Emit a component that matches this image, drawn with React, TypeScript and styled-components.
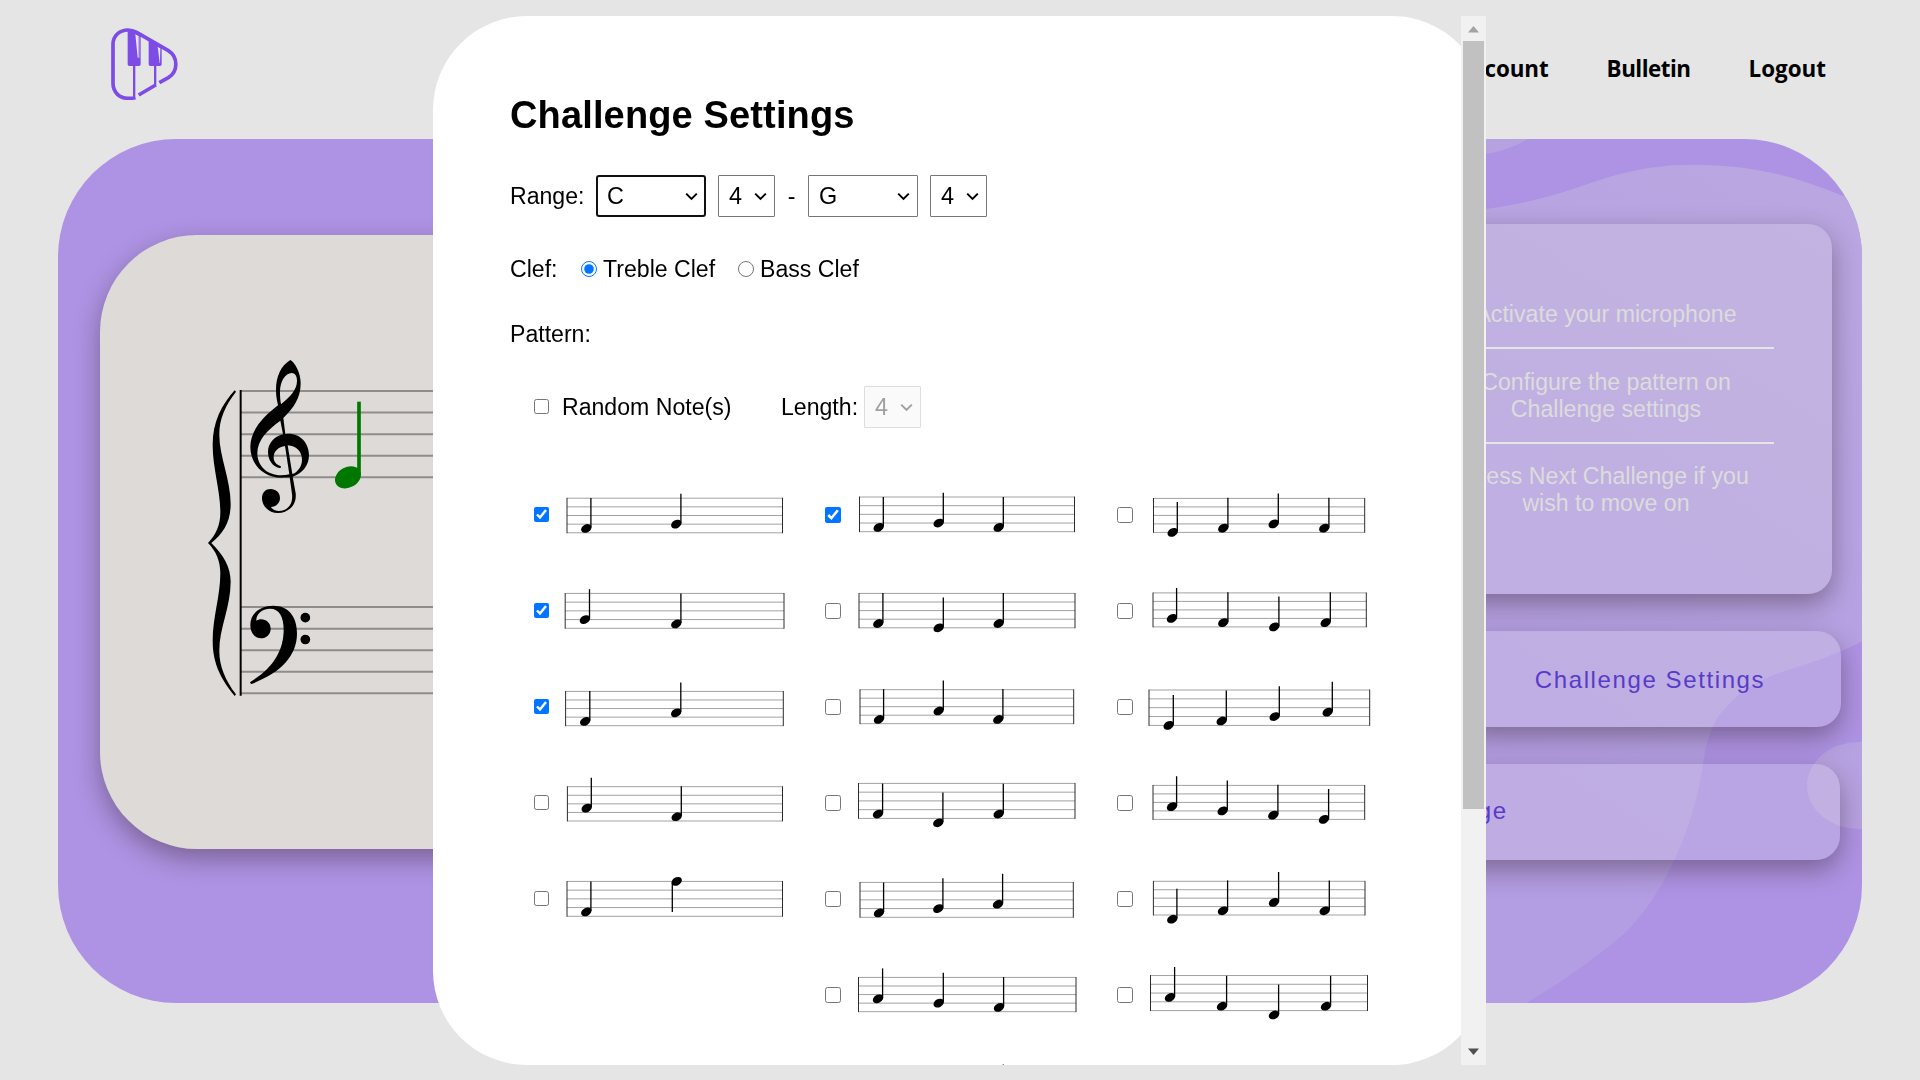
import React from 'react';
import styled, { createGlobalStyle, css } from 'styled-components';

const GlobalStyle = createGlobalStyle`
  * { box-sizing: border-box; }
  html, body { margin: 0; padding: 0; overflow: hidden; }
  body { background: #e5e5e5; font-family: "Liberation Sans", Arial, sans-serif; color: #000; }
`;

const Page = styled.div`
  width: 1920px;
  height: 1080px;
  background: #e5e5e5;
  overflow: hidden;
`;

const Header = styled.header`
  height: 139px;
  padding: 0 94px 0 111px;
  display: flex;
  justify-content: space-between;
`;

const Logo = styled.svg`
  display: block;
  margin-top: 28px;
  width: 67px;
  height: 72px;
`;

const Nav = styled.nav`
  display: flex;
  gap: 58px;
  margin-top: 53px;
  height: 32px;
`;

const NavLink = styled.a<{ $spacing?: number }>`
  font: 700 22.4px/32px "Open Sans", "Noto Sans", sans-serif;
  letter-spacing: ${(p) => p.$spacing ?? 0}px;
  color: #000;
`;

const Stage = styled.main`
  position: relative;
  margin: 0 58px;
  height: 864px;
  border-radius: 118px;
  background: #ae93e4;
  overflow: hidden;
  display: flex;
  gap: 28px;
  padding: 85px 21px 0 42px;
`;

const Waves = styled.svg`
  position: absolute;
  inset: 0;
  width: 100%;
  height: 100%;
`;

const shadow = css`
  box-shadow: 0 10px 26px rgba(40, 20, 20, 0.38);
`;

const Sheet = styled.section`
  ${shadow}
  position: relative;
  margin-top: 11px;
  width: 860px;
  height: 614px;
  border-radius: 97px;
  background: #dedad7;
  padding: 105px 0 0 80px;
`;

const GrandStaff = styled.svg`
  display: block;
  width: 720px;
  height: 370px;
`;

const Side = styled.section`
  position: relative;
  flex: 1;
  display: flex;
  flex-direction: column;
  align-items: flex-end;
  gap: 37px;
`;

const HelpCard = styled.div`
  ${shadow}
  width: 452px;
  height: 370px;
  margin-right: 9px;
  border-radius: 24px;
  background: rgba(222, 218, 227, 0.25);
  padding: 77px 58px 0;
`;

const HelpStep = styled.p<{ $divided?: boolean }>`
  margin: 0;
  font-size: 23.15px;
  line-height: 27px;
  text-align: center;
  color: #dcdcdc;
  white-space: pre-line;
  ${(p) => p.$divided && css`
    border-bottom: 2px solid #e5e5e5;
    padding-bottom: 19px;
    margin-bottom: 20px;
  `}

  &:last-child {
    margin-top: -1px;
  }
`;

const ButtonRow = styled.div`
  display: flex;
  justify-content: flex-end;
  width: 100%;
`;

const ActionButton = styled.button<{ $width: number; $offset?: number; $top?: number; $bottom?: number }>`
  ${shadow}
  width: ${(p) => p.$width}px;
  height: 96px;
  margin-right: ${(p) => p.$offset ?? 0}px;
  border: 0;
  border-radius: 24px;
  background: rgba(222, 218, 227, 0.25);
  color: #583bc9;
  font: 400 24px/30px "Liberation Sans", Arial, sans-serif;
  letter-spacing: 1.6px;
  padding: ${(p) => p.$top ?? 0}px 0 ${(p) => p.$bottom ?? 0}px;
`;

const Overlay = styled.div`
  position: fixed;
  inset: 0;
  display: flex;
  align-items: flex-start;
  padding: 16px 0 0 433px;
`;

const Dialog = styled.div`
  position: relative;
  width: 1053px;
  height: 1049px;
`;

const DialogBody = styled.div`
  height: 100%;
  border-radius: 94px;
  background: #fff;
  overflow: hidden;
  padding: 75px 0 0 77px;
`;

const Title = styled.h2`
  margin: 0;
  font-size: 38px;
  line-height: 48px;
  letter-spacing: 0.14px;
`;

const Row = styled.div<{ $top: number; $height: number; $indent?: number }>`
  display: flex;
  align-items: center;
  margin-top: ${(p) => p.$top}px;
  height: ${(p) => p.$height}px;
  padding-left: ${(p) => p.$indent ?? 0}px;
  font-size: 23.1px;
  line-height: 28px;
`;

const Label = styled.span<{ $width?: number; $left?: number; $center?: boolean }>`
  width: ${(p) => (p.$width ? `${p.$width}px` : 'auto')};
  margin-left: ${(p) => p.$left ?? 0}px;
  text-align: ${(p) => (p.$center ? 'center' : 'left')};
  white-space: nowrap;
`;

const SelectBox = styled.div<{ $width: number; $gap?: number }>`
  position: relative;
  width: ${(p) => p.$width}px;
  height: 42px;
  margin-right: ${(p) => p.$gap ?? 0}px;

  svg {
    position: absolute;
    right: 8px;
    top: 17px;
    width: 13px;
    height: 9px;
    pointer-events: none;
  }
`;

const NativeSelect = styled.select<{ $active?: boolean }>`
  appearance: none;
  width: 100%;
  height: 100%;
  border: ${(p) => (p.$active ? '2px solid #101010' : '1px solid #767676')};
  border-radius: ${(p) => (p.$active ? 3 : 1)}px;
  padding: 0 0 0 ${(p) => (p.$active ? 9 : 10)}px;
  background: #fff;
  color: #000;
  font: 400 23.4px/28px "Liberation Sans", Arial, sans-serif;
  outline: 0;

  &:disabled {
    border-color: #dedede;
    background: #fafafa;
    color: #a0a0a0;
    opacity: 1;
  }
`;

const Radio = styled.input.attrs({ type: 'radio' })`
  width: 16px;
  height: 16px;
  margin: 0 6px 0 0;
`;

const Check = styled.input.attrs({ type: 'checkbox' })<{ $size?: number }>`
  flex: none;
  width: ${(p) => p.$size ?? 16}px;
  height: ${(p) => p.$size ?? 16}px;
  margin: 0 0 ${(p) => (p.$size === 15 ? 1 : 0)}px;
`;

const Patterns = styled.div`
  display: grid;
  grid-template-columns: 291px 292px 270px;
  margin: 39px 0 0 24px;
`;

const PatternColumn = styled.div`
  display: flex;
  flex-direction: column;
`;

const PatternItem = styled.label`
  display: grid;
  grid-template-columns: 16px 240px;
  gap: 9px;
  align-items: center;
  height: 96px;
`;

const PatternStaff = styled.svg`
  width: 240px;
  height: 96px;
  display: block;
`;

const Scrollbar = styled.div`
  position: absolute;
  top: 0;
  right: 0;
  width: 25px;
  height: 100%;
  background: #f1f1f1;
  display: flex;
  flex-direction: column;
  align-items: center;
`;

const ScrollArrow = styled.svg`
  width: 25px;
  height: 25px;
`;

const ScrollThumb = styled.div`
  width: 21px;
  height: 768px;
  margin-bottom: auto;
  background: #c1c1c1;
`;

type Pattern = {
  left: number;
  right: number;
  top: number;
  bottom: number;
  notes: [number, number][];
  checked?: boolean;
};

const p = (
  left: number, right: number, top: number, bottom: number,
  notes: [number, number][], checked = false,
): Pattern => ({ left, right, top, bottom, notes, checked });

const columns: { inset: number; size: number; items: Pattern[] }[] = [
  {
    inset: -1,
    size: 15,
    items: [
      p(7, 222.5, -16.8, 17.8, [[26.3, 1], [116.3, 2]], true),
      p(5.2, 224, -17.6, 17.3, [[24.9, 2], [116.3, 1]], true),
      p(5.6, 223.3, -15.6, 18.7, [[25.2, 1], [116.2, 3]], true),
      p(7.4, 222.5, -16.3, 18, [[26.7, 3], [116.7, 1]]),
      p(7, 222.5, -17.6, 17.3, [[26.3, 1], [116.7, 8]]),
    ],
  },
  {
    inset: 0,
    size: 16,
    items: [
      p(9.5, 224.5, -18, 16.7, [[28.7, 1], [88.7, 2], [148.7, 1]], true),
      p(9, 225, -17.6, 16.8, [[28.3, 1], [88.7, 0], [148.7, 1]]),
      p(10, 223.7, -17.3, 16.7, [[29, 1], [88.7, 3], [148.3, 1]]),
      p(8.5, 225, -19.6, 15.4, [[28, 1], [88.3, -1], [148.7, 1]]),
      p(10, 223.3, -16.6, 18.3, [[29, 1], [88.3, 2], [148, 3]]),
      p(8.5, 226, -17.6, 16.7, [[28, 3], [88.7, 2], [149, 1]]),
      p(9, 225, -17.6, 16.7, [[28.5, 1], [88.7, 1], [148.7, 3]]),
    ],
  },
  {
    inset: 2,
    size: 16,
    items: [
      p(13.5, 224.7, -16.6, 17.4, [[32.7, 0], [83.3, 1], [133.7, 2], [184.3, 1]]),
      p(13, 226.3, -18.1, 15.9, [[32, 2], [83.3, 1], [134.3, 0], [185.7, 1]]),
      p(9, 229.7, -17, 18.4, [[28.7, 0], [81.7, 1], [134.7, 2], [187.7, 3]]),
      p(13, 224.7, -17.6, 16.4, [[32, 3], [82.7, 2], [133.3, 1], [184, 0]]),
      p(13.4, 225, -17.7, 16, [[32.3, -1], [83, 1], [134, 3], [184.7, 1]]),
      p(10.5, 227.5, -19.5, 15.6, [[30, 3], [82, 1], [134, -1], [186, 1]]),
    ],
  },
];

function MiniStaff({ pattern, inset }: { pattern: Pattern; inset: number }) {
  const { left, right, top, bottom, notes } = pattern;
  const gap = (bottom - top) / 4;
  return (
    <PatternStaff viewBox={`${inset} -48 240 96`}>
      {[0, 1, 2, 3, 4].map((i) => (
        <path key={i} d={`M${left} ${top + gap * i}H${right}`} stroke="#a2a2a2" strokeWidth="1" />
      ))}
      <path d={`M${left} ${top - 0.4}V${bottom + 0.4}M${right} ${top - 0.4}V${bottom + 0.4}`} stroke="#2c2c2c" strokeWidth="1" />
      {notes.map(([x, step], i) => {
        const y = bottom - (gap / 2) * step;
        const down = step > 4;
        return (
          <g key={i}>
            <ellipse cx={x} cy={y} rx="5.5" ry="4" transform={`rotate(-28 ${x} ${y})`} />
            <path
              d={down ? `M${x - 4.4} ${y + 1}V${y + 30.5}` : `M${x + 4.6} ${y - 1}V${y - 30.4}`}
              stroke="#000"
              strokeWidth="1.3"
            />
          </g>
        );
      })}
    </PatternStaff>
  );
}

function Chevron({ color = '#000' }: { color?: string }) {
  return (
    <svg viewBox="0 0 13 9">
      <path d="M1.2 1.6 6.5 6.9 11.8 1.6" fill="none" stroke={color} strokeWidth="2" />
    </svg>
  );
}

function Select({ value, width, gap, active, disabled }: {
  value: string; width: number; gap?: number; active?: boolean; disabled?: boolean;
}) {
  return (
    <SelectBox $width={width} $gap={gap}>
      <NativeSelect $active={active} disabled={disabled} defaultValue={value}>
        <option>{value}</option>
      </NativeSelect>
      <Chevron color={disabled ? '#a0a0a0' : '#000'} />
    </SelectBox>
  );
}

function BrandLogo() {
  return (
    <Logo viewBox="213 85 201 216">
      <g fill="none" stroke="#7d4be6" strokeWidth="11">
        <path d="M286 294C279 296 272 296 264 296C238 296 219 277 219 251V134C219 109 238 91 264 91C274 91 283 94 290 98L385 153C415 172 415 215 385 234L358 249" />
        <path d="M347 256 296 286" />
      </g>
      <path d="M279 196H286V298H279ZM342 196H349V261H342Z" fill="#7d4be6" />
      <path fillRule="evenodd" fill="#7d4be6" d="M263 92H285L302 102V194Q302 199 297 199H268Q263 199 263 194ZM286 104 293 174 296 174 296 109Z" />
      <path fillRule="evenodd" fill="#7d4be6" d="M326 121 365 142V194Q365 199 360 199H331Q326 199 326 194ZM353 141 359 190 360 190 361 146Z" />
      <path d="M299 111V176" stroke="#e5e5e5" strokeWidth="1" />
    </Logo>
  );
}

const TREBLE =
  'M331 60C345 68 362 98 362 130C362 175 340 205 310 234L316 282C320 281 324 281 326 281C362 281 387 310 387 346C387 376 366 402 338 410L347 460C351 495 325 519 294 519C266 519 246 498 246 475C246 457 257 447 272 447C288 447 300 458 300 474C300 490 288 500 273 501C277 508 287 513 297 513C320 513 340 495 336 462L329 412C322 413 312 413 304 413C250 413 211 372 211 322C211 270 250 230 294 196C290 175 288 165 288 150C288 110 302 78 331 60Z' +
  'M335 99C316 99 300 125 300 155C300 170 301 182 303 193C330 170 351 150 351 122C351 108 345 99 335 99Z' +
  'M301 242C262 270 232 300 232 340C232 378 262 406 303 406C312 406 320 405 328 403L315 318C296 320 281 335 281 351C281 365 288 373 301 378C305 381 303 384 298 384C278 380 264 360 264 336C264 310 282 290 309 283Z' +
  'M323 316C348 317 366 335 366 359C366 378 354 396 337 402Z';

const BASS =
  'M211 855C211 821 240 797 280 797C325 797 351 830 351 880C351 950 300 1000 214 1032C210 1030 209 1027 212 1025C280 985 311 930 311 870C311 830 298 806 270 806C245 806 228 824 229 842C234 840 238 838 243 838C260 838 272 850 272 866C272 883 259 895 243 895C223 895 211 876 211 855Z';

const BRACE =
  'M164 151C125 195 98 245 98 315C98 385 121 450 121 517C121 555 108 585 84 609C108 633 121 663 121 700C121 768 98 833 98 903C98 973 125 1020 164 1068L168 1063C135 1020 117 975 118 930C118 865 152 800 152 725C152 680 130 645 94 609C130 580 152 545 152 492C152 420 118 350 118 285C117 240 135 197 168 155Z';

export default function App() {
  return (
    <>
      <GlobalStyle />
      <Page>
        <Header>
          <BrandLogo />
          <Nav>
            <NavLink $spacing={-0.1}>Account</NavLink>
            <NavLink $spacing={-0.5}>Bulletin</NavLink>
            <NavLink>Logout</NavLink>
          </Nav>
        </Header>

        <Stage>
          <Waves viewBox="58 139 1804 864">
            <defs>
              <linearGradient id="wave" gradientUnits="userSpaceOnUse" x1="1480" y1="800" x2="1850" y2="200">
                <stop offset="0" stopColor="#b39de3" />
                <stop offset="0.5" stopColor="#b6a2e2" />
                <stop offset="1" stopColor="#baa6e0" />
              </linearGradient>
            </defs>
            <circle cx="1470" cy="45" r="110.2" fill="#b6a2e1" />
            <path
              fill="url(#wave)"
              d="M1300 220C1370 220 1430 217 1486 209C1517 205 1540 199 1567 191C1608 177 1640 164.7 1694 164.7C1750 164.7 1795 176 1843 196L1880 212V634L1862 641.5C1845 650 1830 656 1810 663C1795 668 1782 671 1769 677C1757 682 1750 686 1741 693C1728 704 1720 713 1715 722C1708 737 1706 745 1703.500 760C1701 778 1698 794 1693 810C1688 828 1682 844 1674 860C1666 878 1656 895 1645 910C1632 927 1617 941 1600 953C1576 972 1552 988 1526 1003H1300Z"
            />
            <ellipse cx="1859" cy="785.500" rx="52" ry="43.500" fill="#b7a2e1" />
          </Waves>

          <Sheet>
            <GrandStaff viewBox="0 0 2160 1110">
              <path
                d="M180 153H2080M180 217.500H2080M180 282.500H2080M180 347.500H2080M180 412H2080M180 801H2080M180 866H2080M180 930.500H2080M180 995.500H2080M180 1060H2080"
                stroke="#8f8d8b"
                strokeWidth="6"
              />
              <path d="M182 150V1067" stroke="#000" strokeWidth="6" />
              <path d={BRACE} />
              <path d={TREBLE} fillRule="evenodd" />
              <path d={BASS} />
              <circle cx="376" cy="833" r="14.500" />
              <circle cx="376" cy="898.500" r="14.500" />
              <path d="M537 185V402" stroke="#007800" strokeWidth="11" />
              <ellipse cx="504" cy="412" rx="41" ry="30.500" transform="rotate(-28 504 412)" fill="#007800" />
            </GrandStaff>
          </Sheet>

          <Side>
            <HelpCard>
              <HelpStep $divided>Activate your microphone</HelpStep>
              <HelpStep $divided>{'Configure the pattern on\nChallenge settings'}</HelpStep>
              <HelpStep>{'Press Next Challenge if you\nwish to move on'}</HelpStep>
            </HelpCard>
            <ButtonRow>
              <ActionButton $width={382} $top={2}>Challenge Settings</ActionButton>
            </ButtonRow>
            <ButtonRow>
              <ActionButton $width={851} $offset={1} $bottom={2}>Next Challenge</ActionButton>
            </ButtonRow>
          </Side>
        </Stage>
      </Page>

      <Overlay>
        <Dialog role="dialog">
          <DialogBody>
            <Title>Challenge Settings</Title>
            <Row $top={36} $height={42}>
              <Label $width={86}>Range:</Label>
              <Select value="C" width={110} gap={12} active />
              <Select value="4" width={57} />
              <Label $width={33} $center>-</Label>
              <Select value="G" width={110} gap={12} />
              <Select value="4" width={57} />
            </Row>
            <Row $top={38} $height={28}>
              <Label $width={71}>Clef:</Label>
              <Radio name="clef" defaultChecked />
              <Label $width={135}>Treble Clef</Label>
              <Radio name="clef" />
              <Label>Bass Clef</Label>
            </Row>
            <Row $top={37} $height={28}>
              <Label>Pattern:</Label>
            </Row>
            <Row $top={38} $height={42} $indent={24}>
              <Check $size={15} />
              <Label $width={219} $left={13}>Random Note(s)</Label>
              <Label $width={83}>Length:</Label>
              <Select value="4" width={57} disabled />
            </Row>
            <Patterns>
              {columns.map((column, c) => (
                <PatternColumn key={c}>
                  {column.items.map((item, i) => (
                    <PatternItem key={i}>
                      <Check $size={column.size} defaultChecked={item.checked} />
                      <MiniStaff pattern={item} inset={column.inset} />
                    </PatternItem>
                  ))}
                </PatternColumn>
              ))}
            </Patterns>
          </DialogBody>
          <Scrollbar>
            <ScrollArrow viewBox="0 0 25 25">
              <path d="M7 16.500 12.500 10 18 16.500Z" fill="#a3a3a3" />
            </ScrollArrow>
            <ScrollThumb />
            <ScrollArrow viewBox="0 0 25 25">
              <path d="M7 8.500H18L12.500 15Z" fill="#505050" />
            </ScrollArrow>
          </Scrollbar>
        </Dialog>
      </Overlay>
    </>
  );
}
